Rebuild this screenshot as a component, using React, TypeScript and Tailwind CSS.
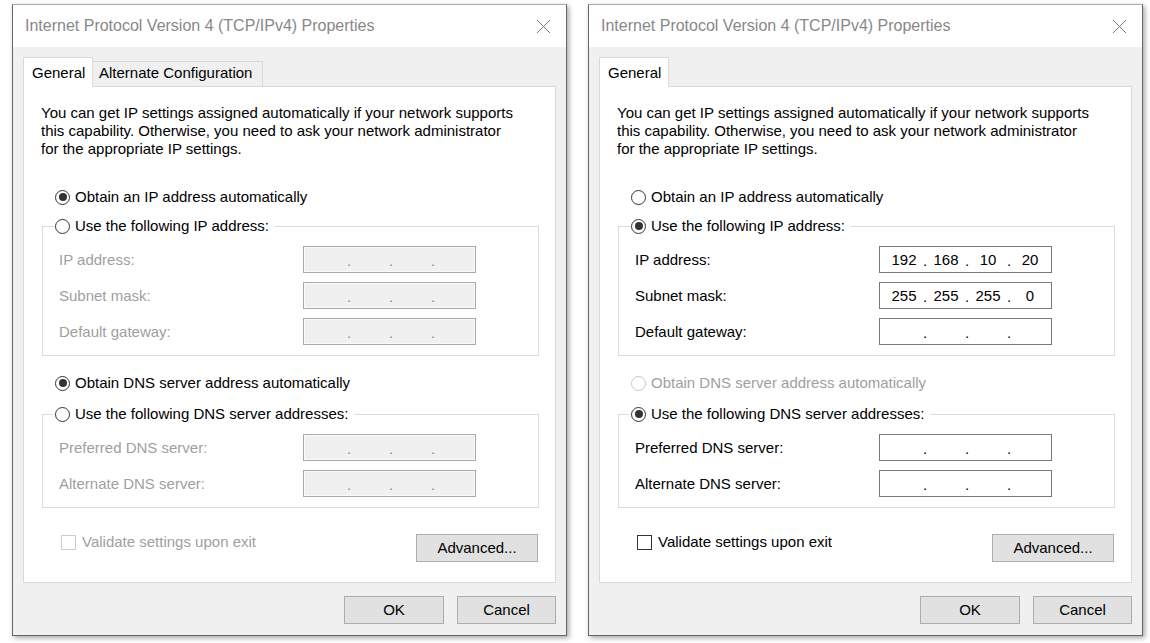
import React from "react";

const FONT = "font-['Liberation_Sans',Arial,sans-serif]";

function Radio({ checked, disabled }: { checked?: boolean; disabled?: boolean }) {
  return (
    <span
      className={`flex h-[15px] w-[15px] shrink-0 items-center justify-center rounded-full border bg-white ${
        disabled ? "border-[#c6c6c6]" : "border-[#333333]"
      }`}
    >
      {checked && (
        <span className={`h-[8px] w-[8px] rounded-full ${disabled ? "bg-[#c6c6c6]" : "bg-[#333333]"}`} />
      )}
    </span>
  );
}

function IpBox({ values, disabled }: { values?: string[]; disabled?: boolean }) {
  const v = values ?? ["", "", "", ""];
  return (
    <div
      className={`flex h-[27px] w-[173px] shrink-0 items-center border pl-[6px] leading-[18px] ${
        disabled
          ? "border-[#a9a9a9] bg-[#f0f0f0] text-[#8a8aa6] shadow-[inset_0_0_0_1px_#fafafa]"
          : "border-[#7a7a7a] bg-white text-black"
      }`}
    >
      {v.map((s, i) => (
        <React.Fragment key={i}>
          <span className="w-[36px] text-center">{s}</span>
          {i < 3 && <span className="w-[6px] pt-[2px] text-center">.</span>}
        </React.Fragment>
      ))}
    </div>
  );
}

function FieldRow({ label, disabled, values }: { label: string; disabled?: boolean; values?: string[] }) {
  return (
    <div className="flex items-center justify-between">
      <span className={disabled ? "text-[#a0a0a0]" : "text-black"}>{label}</span>
      <IpBox disabled={disabled} values={values} />
    </div>
  );
}

function Group({
  legend,
  checked,
  children,
  className,
}: {
  legend: string;
  checked?: boolean;
  children: React.ReactNode;
  className: string;
}) {
  return (
    <fieldset className={`ml-[18px] w-[497px] border border-[#dcdcdc] pb-[10px] ${className}`}>
      <legend className="ml-[12px] flex h-[18px] items-center gap-[5px] pr-[6px] text-black">
        <Radio checked={checked} />
        <span>{legend}</span>
      </legend>
      <div className="flex flex-col gap-[9px] pl-[16px] pr-[62px] pt-[11px]">{children}</div>
    </fieldset>
  );
}

function RadioRow({
  label,
  checked,
  disabled,
  className,
}: {
  label: string;
  checked?: boolean;
  disabled?: boolean;
  className: string;
}) {
  return (
    <div className={`flex h-[18px] items-center gap-[5px] pl-[31px] ${className}`}>
      <Radio checked={checked} disabled={disabled} />
      <span className={disabled ? "text-[#a0a0a0]" : "text-black"}>{label}</span>
    </div>
  );
}

function Button({ children, className }: { children: React.ReactNode; className: string }) {
  return (
    <div
      className={`flex h-[28px] items-center justify-center border border-[#adadad] bg-[#e1e1e1] text-black ${className}`}
    >
      {children}
    </div>
  );
}

function Dialog({ manual }: { manual?: boolean }) {
  return (
    <div className="flex w-[555px] flex-col border border-[#666666] border-t-[#a8a8a8] bg-[#f0f0f0] shadow-[2px_2px_5px_rgba(0,0,0,0.35)]">
      <div className="flex h-[42px] items-center justify-between bg-white">
        <span className="pl-[12px] text-[16px] text-[#888888]">Internet Protocol Version 4 (TCP/IPv4) Properties</span>
        <div className="flex h-full w-[46px] items-center justify-center">
          <svg width="15" height="15" viewBox="0 0 15 15">
            <path d="M1 1L14 14M14 1L1 14" stroke="#7a7a7a" strokeWidth="1" fill="none" />
          </svg>
        </div>
      </div>
      <div className="flex flex-col px-[10px] pb-[11px] pt-[10px] text-[15px] leading-[18px]">
        <div className="flex h-[29px] items-end">
          <div className="relative z-10 mb-[-1px] h-[30px] w-[70px] border-l border-r border-t border-[#d9d9d9] bg-white pl-[8px] pt-[6px] text-black">
            General
          </div>
          {!manual && (
            <div className="h-[25px] w-[170px] border-r border-t border-[#d9d9d9] bg-[#f0f0f0] pl-[6px] pt-[2px] text-black">
              Alternate Configuration
            </div>
          )}
        </div>
        <div className="flex flex-col border border-[#d9d9d9] bg-white pb-[20px]">
          <p className="ml-[17px] mt-[17px] text-black">
            You can get IP settings assigned automatically if your network supports
            <br />
            this capability. Otherwise, you need to ask your network administrator
            <br />
            for the appropriate IP settings.
          </p>
          <RadioRow className="mt-[30px]" label="Obtain an IP address automatically" checked={!manual} />
          <Group className="mt-[11px]" legend="Use the following IP address:" checked={manual}>
            <FieldRow label="IP address:" disabled={!manual} values={manual ? ["192", "168", "10", "20"] : undefined} />
            <FieldRow label="Subnet mask:" disabled={!manual} values={manual ? ["255", "255", "255", "0"] : undefined} />
            <FieldRow label="Default gateway:" disabled={!manual} />
          </Group>
          <RadioRow
            className="mt-[18px]"
            label="Obtain DNS server address automatically"
            checked={!manual}
            disabled={manual}
          />
          <Group className="mt-[13px]" legend="Use the following DNS server addresses:" checked={manual}>
            <FieldRow label="Preferred DNS server:" disabled={!manual} />
            <FieldRow label="Alternate DNS server:" disabled={!manual} />
          </Group>
          <div className="mt-[26px] flex items-start justify-between pr-[17px]">
            <div className="flex h-[16px] items-center gap-[6px] pl-[37px]">
              <span
                className={`h-[15px] w-[15px] border bg-white ${manual ? "border-[#333333]" : "border-[#cccccc]"}`}
              />
              <span className={manual ? "text-black" : "text-[#a0a0a0]"}>Validate settings upon exit</span>
            </div>
            <Button className="w-[122px]">Advanced...</Button>
          </div>
        </div>
        <div className="mt-[13px] flex justify-end gap-[13px]">
          <Button className="w-[100px]">OK</Button>
          <Button className="w-[99px]">Cancel</Button>
        </div>
      </div>
    </div>
  );
}

export default function App() {
  return (
    <div className={`flex h-[643px] w-[1150px] items-start gap-[21px] bg-white pl-[12px] pt-[4px] ${FONT}`}>
      <Dialog />
      <Dialog manual />
    </div>
  );
}
